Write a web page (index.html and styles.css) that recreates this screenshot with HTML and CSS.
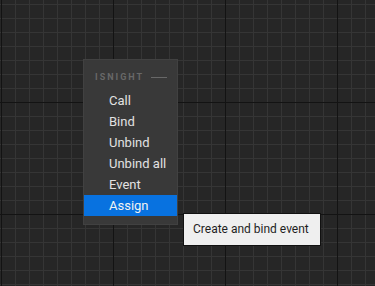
FILE: index.html
```html
<!DOCTYPE html>
<html>

<head>
  <title>Graph Context Menu</title>
  <link rel="stylesheet" href="styles.css">
</head>

<body>
  <div class="graph">
    <div class="context-menu">
      <div class="menu-header">
        <span class="menu-title">ISNIGHT</span>
        <span class="menu-rule"></span>
      </div>
      <div class="menu-item">Call</div>
      <div class="menu-item">Bind</div>
      <div class="menu-item">Unbind</div>
      <div class="menu-item">Unbind all</div>
      <div class="menu-item">Event</div>
      <div class="menu-item active">Assign</div>
    </div>

    <div class="tooltip">Create and bind event</div>
  </div>
</body>

</html>
```

FILE: styles.css
```css
* {
  font-family: Roboto, "Liberation Sans", sans-serif;
  box-sizing: border-box;
}

body {
  margin: 0;
  width: 375px;
  height: 286px;
  overflow: hidden;
}

.graph {
  position: relative;
  width: 375px;
  height: 286px;
  background-color: #262626;
  background-image:
    linear-gradient(to right, #131313 1px, transparent 1px),
    linear-gradient(to bottom, #131313 1px, transparent 1px),
    linear-gradient(to right, #353535 1px, transparent 1px),
    linear-gradient(to bottom, #353535 1px, transparent 1px);
  background-size: 112px 112px, 112px 112px, 14px 14px, 14px 14px;
  background-position: 1px 0, 0 102px, 1px 0, 0 4px;
}

.context-menu {
  position: absolute;
  left: 83px;
  top: 59px;
  width: 95px;
  padding-bottom: 8px;
  background-color: #393939;
  border: 1px solid #414141;
}

.menu-header {
  display: flex;
  align-items: center;
  height: 30px;
  padding: 4px 10px 0 11px;
}

.menu-title {
  font-size: 9px;
  font-weight: bold;
  letter-spacing: 2px;
  color: #686868;
  margin-right: auto;
}

.menu-rule {
  width: 16px;
  height: 1px;
  background-color: #686868;
}

.menu-item {
  height: 21px;
  line-height: 21px;
  padding-left: 25px;
  font-size: 13px;
  color: #e2e2e2;
}

.menu-item.active {
  background-color: #0872e0;
  color: #f2f2f2;
}

.tooltip {
  position: absolute;
  left: 183px;
  top: 213px;
  width: 138px;
  height: 33px;
  line-height: 31px;
  padding-left: 9px;
  background-color: #efefef;
  border: 1px solid #111111;
  color: #1e1e1e;
  font-size: 12px;
}
```
